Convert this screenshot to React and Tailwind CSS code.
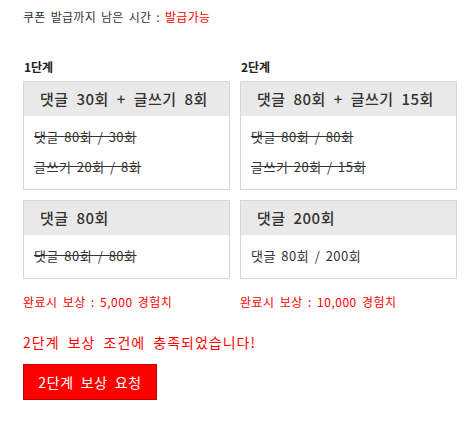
const FONT = { fontFamily: '"Noto Sans CJK KR", "Noto Sans", sans-serif' };

const STAGES = [
  {
    label: "1단계",
    width: "w-[207px]",
    reward: "완료시 보상 : 5,000 경험치",
    boxes: [
      {
        title: "댓글 30회 + 글쓰기 8회",
        lines: [
          { text: "댓글 80회 / 30회", done: true },
          { text: "글쓰기 20회 / 8회", done: true },
        ],
      },
      {
        title: "댓글 80회",
        lines: [{ text: "댓글 80회 / 80회", done: true }],
      },
    ],
  },
  {
    label: "2단계",
    width: "w-[217px]",
    reward: "완료시 보상 : 10,000 경험치",
    boxes: [
      {
        title: "댓글 80회 + 글쓰기 15회",
        lines: [
          { text: "댓글 80회 / 80회", done: true },
          { text: "글쓰기 20회 / 15회", done: true },
        ],
      },
      {
        title: "댓글 200회",
        lines: [{ text: "댓글 80회 / 200회", done: false }],
      },
    ],
  },
];

function MissionBox({ box }) {
  return (
    <div className="border border-[#d6d6d6] bg-white">
      <div className="h-[34px] bg-[#e9e9e9] px-4 flex items-center text-[15px] font-medium text-[#333] tracking-[0.5px] [word-spacing:4px]">
        {box.title}
      </div>
      <div className="px-[10px] pt-[6px] pb-[7px]">
        {box.lines.map((l) => (
          <div
            key={l.text}
            className={`leading-[30px] text-[13px] text-[#333] tracking-[0.5px] [word-spacing:2px] ${l.done ? "line-through" : ""}`}
          >
            {l.text}
          </div>
        ))}
      </div>
    </div>
  );
}

export default function App() {
  return (
    <div className="w-[467px] h-[435px] bg-white pl-[23px] pt-[8px]" style={FONT}>
      <div className="text-[12px] text-[#333] leading-[18px] tracking-[0.3px] [word-spacing:2px]">
        쿠폰 발급까지 남은 시간 : <span className="text-[#ff0000]">발급가능</span>
      </div>

      <div className="flex gap-[10px] mt-[33px]">
        {STAGES.map((s) => (
          <div key={s.label} className={`${s.width} shrink-0`}>
            <div className="text-[12px] font-bold text-[#222] leading-[16px] ml-px">{s.label}</div>
            <div className="mt-[6px] flex flex-col gap-[10px]">
              {s.boxes.map((b) => (
                <MissionBox key={b.title} box={b} />
              ))}
            </div>
            <div className="mt-[15px] text-[12px] text-[#ff0000] leading-[16px] tracking-[0.5px] [word-spacing:2px]">
              {s.reward}
            </div>
          </div>
        ))}
      </div>

      <div className="mt-[23px] text-[14px] text-[#ff0000] leading-[18px] tracking-[1px] [word-spacing:4px]">
        2단계 보상 조건에 충족되었습니다!
      </div>
      <button className="mt-[13px] w-[134px] h-[36px] bg-[#ff0000] border border-[#c00000] text-white text-[14px] tracking-[0.7px] [word-spacing:3px]">
        2단계 보상 요청
      </button>
    </div>
  );
}
